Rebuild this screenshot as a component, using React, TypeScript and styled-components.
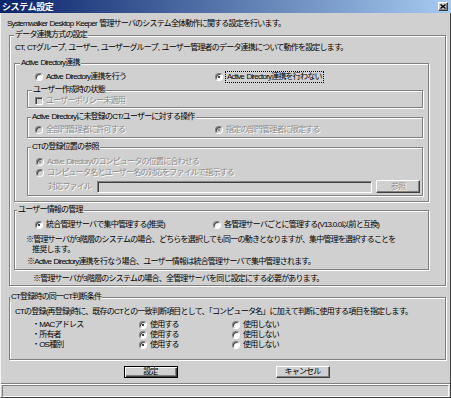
import React from 'react';
import styled, { createGlobalStyle, css } from 'styled-components';

const GlobalStyle = createGlobalStyle`
  html, body {
    margin: 0;
    padding: 0;
    background: #d0d0d0;
  }
`;

const Window = styled.div`
  width: 451px;
  height: 398px;
  display: flex;
  flex-direction: column;
  overflow: hidden;
  background: #d0d0d0;
  font-family: 'Liberation Sans', 'Noto Sans CJK JP', sans-serif;
  font-size: 8px;
  line-height: 10px;
  letter-spacing: -0.8px;
  word-spacing: 1px;
  color: #000;
`;

const TitleBar = styled.div`
  flex: none;
  height: 13px;
  display: flex;
  align-items: center;
  justify-content: space-between;
  padding: 0 3px 0 2px;
  background: linear-gradient(to right, #0a246a, #a6caf0);
`;

const Title = styled.span`
  color: #fff;
  font-weight: bold;
  font-size: 9px;
  letter-spacing: -0.4px;
`;

const CloseButton = styled.span`
  width: 10px;
  height: 9px;
  box-sizing: border-box;
  display: flex;
  align-items: center;
  justify-content: center;
  background: #d0d0d0;
  border: 1px solid;
  border-color: #fff #404040 #404040 #fff;
  box-shadow: inset -1px -1px 0 #808080;
`;

const Frame = styled.div`
  flex: 1;
  display: flex;
  flex-direction: column;
  border-left: 1px solid #f4f4f4;
  border-right: 1px solid #404040;
  border-bottom: 1px solid #404040;
`;

const Content = styled.div`
  padding: 6px 4px 0 6px;
`;

const Line = styled.div<{ $indent?: number; $top?: number }>`
  margin-top: ${(p) => p.$top ?? 0}px;
  padding-left: ${(p) => p.$indent ?? 0}px;
  white-space: nowrap;
`;

const Note = styled.div<{ $top?: number; $indent?: number }>`
  margin-top: ${(p) => p.$top ?? 0}px;
  margin-left: ${(p) => p.$indent ?? 0}px;
  padding-left: 6px;
  text-indent: -6px;
  white-space: nowrap;
`;

const Group = styled.fieldset<{ $pad: string; $top?: number; $left?: number }>`
  margin: ${(p) => p.$top ?? 0}px 0 0 ${(p) => p.$left ?? 0}px;
  padding: ${(p) => p.$pad};
  min-width: 0;
  border: 1px solid #808080;
  box-shadow: 1px 1px 0 #fff, inset 1px 1px 0 #fff;
`;

const Legend = styled.legend<{ $x: number }>`
  padding: 0 1px;
  margin-left: ${(p) => p.$x}px;
  line-height: 10px;
  background: #d0d0d0;
  white-space: nowrap;
`;

const OptionRow = styled.div<{ $cols: string; $indent: number; $top?: number }>`
  display: grid;
  grid-template-columns: ${(p) => p.$cols};
  align-items: center;
  height: 10px;
  margin-top: ${(p) => p.$top ?? 0}px;
  padding-left: ${(p) => p.$indent}px;
  white-space: nowrap;
`;

const Option = styled.label<{ $disabled?: boolean }>`
  display: flex;
  align-items: center;
  gap: 3px;
  ${(p) =>
    p.$disabled &&
    css`
      color: #8c8c8c;
      text-shadow: 1px 1px 0 #fff;
    `}
`;

const Radio = styled.span<{ $checked?: boolean; $disabled?: boolean }>`
  flex: none;
  width: 8px;
  height: 8px;
  box-sizing: border-box;
  border-radius: 50%;
  border: 1px solid;
  border-color: #808080 #fff #fff #808080;
  box-shadow: inset 1px 1px 0 #404040;
  background: ${(p) => (p.$disabled ? '#d0d0d0' : '#fff')};
  display: flex;
  align-items: center;
  justify-content: center;

  &::after {
    content: '';
    display: ${(p) => (p.$checked ? 'block' : 'none')};
    width: 2px;
    height: 2px;
    border-radius: 50%;
    background: ${(p) => (p.$disabled ? '#808080' : '#000')};
  }
`;

const CheckBox = styled.span`
  flex: none;
  width: 8px;
  height: 8px;
  box-sizing: border-box;
  border: 1px solid;
  border-color: #808080 #fff #fff #808080;
  box-shadow: inset 1px 1px 0 #404040;
  background: #d0d0d0;
`;

const Focused = styled.span`
  outline: 1px dotted #000;
  padding: 0 1px;
`;

const FileRow = styled.div`
  display: grid;
  grid-template-columns: 45px 275px 44px;
  column-gap: 4px;
  align-items: center;
  height: 13px;
  margin-top: 2px;
  padding-left: 13px;
  color: #8c8c8c;
  text-shadow: 1px 1px 0 #fff;
  white-space: nowrap;
`;

const FileInput = styled.div`
  height: 12px;
  box-sizing: border-box;
  border: 1px solid;
  border-color: #808080 #fff #fff #808080;
  box-shadow: inset 1px 1px 0 #404040;
  background: #d0d0d0;
`;

const PushButton = styled.div<{ $default?: boolean; $disabled?: boolean; $w: number; $h: number }>`
  width: ${(p) => p.$w}px;
  height: ${(p) => p.$h}px;
  box-sizing: border-box;
  display: flex;
  align-items: center;
  justify-content: center;
  background: #d0d0d0;
  white-space: nowrap;
  ${(p) =>
    p.$default
      ? css`
          border: 1px solid #000;
          box-shadow: inset 1px 1px 0 #fff, inset -1px -1px 0 #404040, inset -2px -2px 0 #808080;
        `
      : css`
          border: 1px solid;
          border-color: #fff #404040 #404040 #fff;
          box-shadow: inset -1px -1px 0 #808080;
        `}
  ${(p) =>
    p.$disabled &&
    css`
      color: #8c8c8c;
      text-shadow: 1px 1px 0 #fff;
    `}
`;

const ButtonBar = styled.div`
  display: flex;
  justify-content: center;
  gap: 98px;
  margin-top: 6px;
`;

const Footer = styled.div`
  margin-top: auto;
  border-top: 1px solid #808080;
  padding-top: 1px;
  box-shadow: inset 0 1px 0 #fff;
`;

const StatusPanel = styled.div`
  height: 12px;
  box-sizing: border-box;
  margin: 0 1px;
  border: 1px solid;
  border-color: #808080 #fff #fff #808080;
`;

const ctItems = ['・MACアドレス', '・所有者', '・OS種別'];

export default function App() {
  return (
    <>
      <GlobalStyle />
      <Window>
        <TitleBar>
          <Title>システム設定</Title>
          <CloseButton>
            <svg width="6" height="5" viewBox="0 0 6 5">
              <path d="M0.5 0.5 L5.5 4.5 M5.5 0.5 L0.5 4.5" stroke="#000" strokeWidth="1.4" />
            </svg>
          </CloseButton>
        </TitleBar>
        <Frame>
          <Content>
            <Line>Systemwalker Desktop Keeper 管理サーバのシステム全体動作に関する設定を行います。</Line>

            <Group $pad="3px 16px 1px 4px" $top={1} $left={2}>
              <Legend $x={0}>データ連携方式の設定</Legend>
              <Line $indent={1}>
                CT, CTグループ, ユーザー, ユーザーグループ, ユーザー管理者のデータ連携について動作を設定します。
              </Line>

              <Group $pad="4px 5px 5px 12px" $top={5}>
                <Legend $x={-7}>Active Directory連携</Legend>
                <OptionRow $cols="180px auto" $indent={8}>
                  <Option>
                    <Radio />
                    Active Directory連携を行う
                  </Option>
                  <Option>
                    <Radio $checked />
                    <Focused>Active Directory連携を行わない</Focused>
                  </Option>
                </OptionRow>

                <Group $pad="1px 4px 1px 7px" $top={3}>
                  <Legend $x={-3}>ユーザー作成時の状態</Legend>
                  <OptionRow $cols="auto" $indent={0}>
                    <Option $disabled>
                      <CheckBox />
                      ユーザーポリシー未適用
                    </Option>
                  </OptionRow>
                </Group>

                <Group $pad="3px 4px 2px 7px" $top={4}>
                  <Legend $x={-4}>Active Directoryに未登録のCT/ユーザーに対する操作</Legend>
                  <OptionRow $cols="180px auto" $indent={0}>
                    <Option $disabled>
                      <Radio $disabled />
                      全部門管理者に許可する
                    </Option>
                    <Option $disabled>
                      <Radio $disabled $checked />
                      指定の部門管理者に限定する
                    </Option>
                  </OptionRow>
                </Group>

                <Group $pad="5px 5px 2px 7px" $top={4}>
                  <Legend $x={-4}>CTの登録位置の参照</Legend>
                  <OptionRow $cols="auto" $indent={1}>
                    <Option $disabled>
                      <Radio $disabled $checked />
                      Active Directoryのコンピュータの位置に合わせる
                    </Option>
                  </OptionRow>
                  <OptionRow $cols="auto" $indent={1} $top={1}>
                    <Option $disabled>
                      <Radio $disabled />
                      コンピュータ名とユーザー名の対応をファイルで指示する
                    </Option>
                  </OptionRow>
                  <FileRow>
                    <span>対応ファイル</span>
                    <FileInput />
                    <PushButton $w={44} $h={13} $disabled>
                      参照
                    </PushButton>
                  </FileRow>
                </Group>
              </Group>

              <Group $pad="5px 5px 2px 12px" $top={3}>
                <Legend $x={-10}>ユーザー情報の管理</Legend>
                <OptionRow $cols="178px auto" $indent={8}>
                  <Option>
                    <Radio $checked />
                    統合管理サーバで集中管理する(推奨)
                  </Option>
                  <Option>
                    <Radio />
                    各管理サーバごとに管理する(V13.0.0以前と互換)
                  </Option>
                </OptionRow>
                <Note $top={5} $indent={-1}>
                  ※管理サーバが3階層のシステムの場合、どちらを選択しても同一の動きとなりますが、集中管理を選択することを
                  <br />
                  推奨します。
                </Note>
                <Line $top={2} $indent={0}>
                  ※Active Directory連携を行なう場合、ユーザー情報は統合管理サーバで集中管理されます。
                </Line>
              </Group>

              <Line $top={4} $indent={19}>
                ※管理サーバが3階層のシステムの場合、全管理サーバを同じ設定にする必要があります。
              </Line>
            </Group>

            <Group $pad="5px 4px 9px 5px" $top={6} $left={2}>
              <Legend $x={-5}>CT登録時の同一CT判断条件</Legend>
              <Line>
                CTの登録(再登録)時に、既存のCTとの一致判断項目として、「コンピュータ名」に加えて判断に使用する項目を指定します。
              </Line>
              {ctItems.map((item, i) => (
                <OptionRow key={item} $cols="107px 93px auto" $indent={17} $top={i === 0 ? 3 : 0}>
                  <span>{item}</span>
                  <Option>
                    <Radio $checked />
                    使用する
                  </Option>
                  <Option>
                    <Radio />
                    使用しない
                  </Option>
                </OptionRow>
              ))}
            </Group>

            <ButtonBar>
              <PushButton $default $w={54} $h={12}>
                設定
              </PushButton>
              <PushButton $w={54} $h={12}>
                キャンセル
              </PushButton>
            </ButtonBar>
          </Content>
          <Footer>
            <StatusPanel />
          </Footer>
        </Frame>
      </Window>
    </>
  );
}
